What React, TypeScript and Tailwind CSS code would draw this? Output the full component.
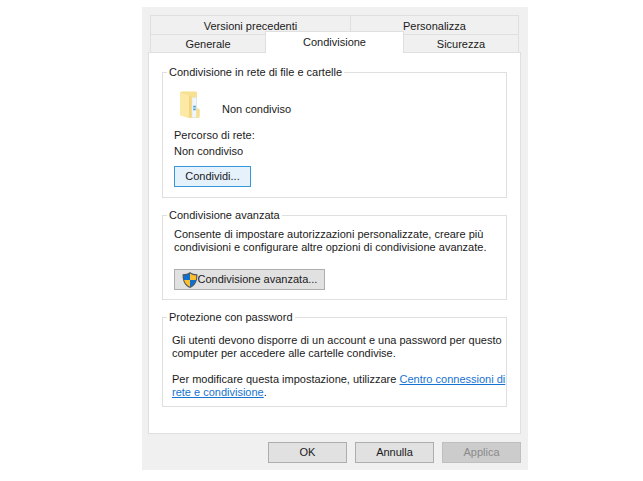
import React from "react";

function FolderIcon() {
  return (
    <svg width="24" height="28" viewBox="0 0 24 28" aria-hidden="true">
      <path d="M2 1.500 L3.500 0.500 H18 L19 1.500 V17 L21.500 18.500 V26 L20 27 H10.500 L2.500 24 Z" fill="#f7e090" />
      <path d="M14 6.500 H18.500 V26.500 H14 Z" fill="#f1f6fa" stroke="#dbe3e8" strokeWidth="0.500" />
      <path d="M15 14.500 H18 V19.500 H15 Z" fill="#9fd0ee" />
      <path d="M15.500 15.500 H17.500 M15.500 18.500 H17.500" stroke="#4d9ad4" strokeWidth="1" />
      <path d="M18.500 18 L20 17.500 L21.500 18.500 V26 L20 27 H18.500 Z" fill="#f8df8d" />
      <path d="M2 1.500 L10 4 Q11 4.300 11 5.500 V27 L2.700 24.600 Q2 24.400 2 23.800 Z" fill="#fde9a6" />
      <path d="M11 5 L13.500 6 V25.500 L11 27 Z" fill="#f3d57e" />
    </svg>
  );
}

function ShieldIcon() {
  return (
    <svg width="16" height="16" viewBox="0 0 16 16" aria-hidden="true">
      <path d="M8 0 C6.200 1.500 3.500 2.200 0.600 2.200 C0.400 8.500 2.200 13.400 8 16 C13.800 13.400 15.600 8.500 15.400 2.200 C12.500 2.200 9.800 1.500 8 0 Z" fill="#505a62" />
      <path d="M8 1.500 C6.200 2.800 4.200 3.300 1.800 3.400 C1.700 5 1.900 6.600 2.200 8 H8 Z" fill="#0f6fd0" />
      <path d="M8 1.500 C9.800 2.800 11.800 3.300 14.200 3.400 C14.300 5 14.100 6.600 13.800 8 H8 Z" fill="#fdbf2d" />
      <path d="M2.200 8 C3 11.200 4.900 13.400 8 14.800 V8 Z" fill="#fdbf2d" />
      <path d="M13.800 8 C13 11.200 11.100 13.400 8 14.800 V8 Z" fill="#0f6fd0" />
    </svg>
  );
}

const tab = "border-[#dfdfdf] text-center";
const group = "min-w-0 border border-[#dfdfdf] pl-[9px]";
const legend = "-ml-[5px] px-0.5";
const footerButton = "h-[21px] w-[79px] border";

export default function App() {
  return (
    <main className="bg-white pt-[7px] pr-[115px] pb-3 pl-[142px] font-['Liberation_Sans',Arial,sans-serif] text-[11px] leading-[13px] text-[#1a1a1a]">
      <section aria-label="Proprietà" className="bg-[#f0f0f0] pt-2 pr-[7px] pb-[7px] pl-1.5">
        <div role="tablist" className="px-0.5">
          <div className="flex h-[19px]">
            <button role="tab" aria-selected="false" className={`${tab} flex-[200] border-t border-l pt-0.5`}>
              Versioni precedenti
            </button>
            <button role="tab" aria-selected="false" className={`${tab} flex-[168] border-x border-t pt-0.5`}>
              Personalizza
            </button>
          </div>
          <div className="flex items-end">
            <button role="tab" aria-selected="false" className={`${tab} h-[18px] flex-[115] border-t border-l pt-0.5`}>
              Generale
            </button>
            <button
              role="tab"
              aria-selected="true"
              className={`${tab} relative -mt-[3px] -mb-px h-[22px] flex-[138] border-x border-t bg-white`}
            >
              Condivisione
            </button>
            <button role="tab" aria-selected="false" className={`${tab} h-[18px] flex-[115] border-t border-r pt-0.5`}>
              Sicurezza
            </button>
          </div>
        </div>

        <div role="tabpanel" className="flex flex-col gap-[11px] border border-[#dfdfdf] bg-white px-[13px] pt-[13px] pb-[26px]">
          <fieldset className={`${group} pb-2.5`}>
            <legend className={legend}>Condivisione in rete di file e cartelle</legend>
            <div className="pl-0.5">
              <div className="flex items-center gap-5 pt-3 pl-1">
                <FolderIcon />
                <span className="pt-2">Non condiviso</span>
              </div>
              <p className="pt-[10px]">Percorso di rete:</p>
              <p className="pt-[3px]">Non condiviso</p>
              <button className="mt-2 block h-[21px] w-[77px] border border-[#3797dc] bg-[#e5f1fb]">Condividi...</button>
            </div>
          </fieldset>

          <fieldset className={`${group} pb-[9px]`}>
            <legend className={legend}>Condivisione avanzata</legend>
            <div className="pl-0.5">
              <p className="pt-1.5">
                Consente di impostare autorizzazioni personalizzate, creare più condivisioni e configurare altre opzioni
                di condivisione avanzate.
              </p>
              <button className="mt-[15px] flex h-[21px] w-[151px] items-center justify-center border border-[#adadad] bg-[#e1e1e1]">
                <ShieldIcon />
                Condivisione avanzata...
              </button>
            </div>
          </fieldset>

          <fieldset className={`${group} pb-[7px]`}>
            <legend className={legend}>Protezione con password</legend>
            <p className="pt-[10px]">
              Gli utenti devono disporre di un account e una password per questo computer per accedere alle cartelle
              condivise.
            </p>
            <p className="pt-[13px]">
              Per modificare questa impostazione, utilizzare{" "}
              <a href="#centro-connessioni" className="text-[#1673d1] underline">
                Centro connessioni di rete e condivisione
              </a>
              .
            </p>
          </fieldset>
        </div>

        <div className="flex justify-end gap-2 pt-2">
          <button className={`${footerButton} border-[#adadad] bg-[#e1e1e1]`}>OK</button>
          <button className={`${footerButton} border-[#adadad] bg-[#e1e1e1]`}>Annulla</button>
          <button disabled className={`${footerButton} border-[#bfbfbf] bg-[#cccccc] text-[#8b8b8b]`}>
            Applica
          </button>
        </div>
      </section>
    </main>
  );
}
